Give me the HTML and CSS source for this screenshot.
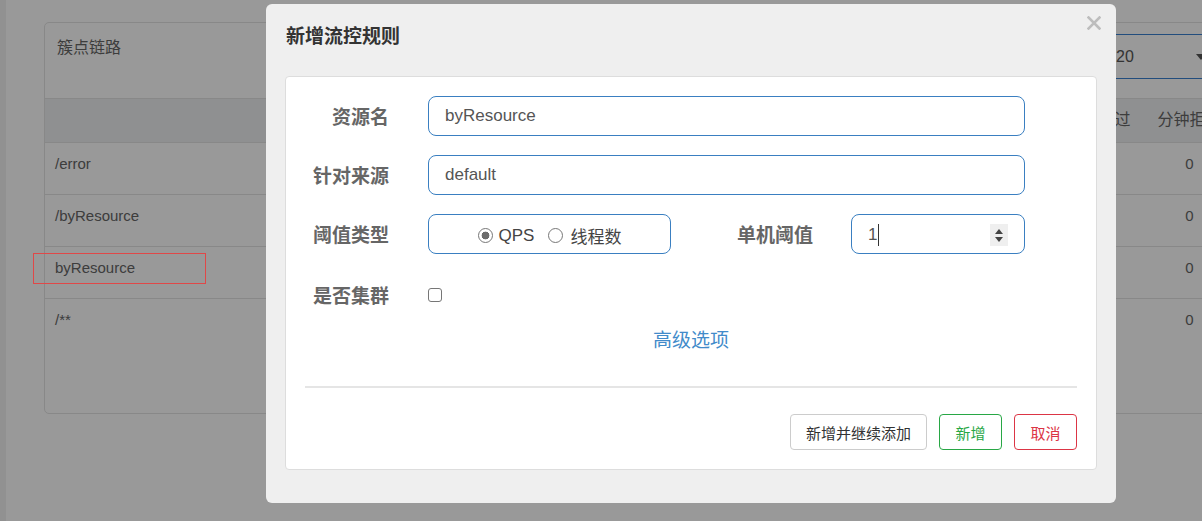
FILE: index.html
```html
<!DOCTYPE html>
<html lang="zh-CN">
<head>
<meta charset="utf-8">
<title>新增流控规则</title>
<link rel="stylesheet" href="styles.css">
</head>
<body>
<div class="page">
  <aside class="sidebar"></aside>
  <main class="main">
    <section class="card">
      <header class="card-head">
        <h2 class="card-title">簇点链路</h2>
        <div class="select"><span>20</span><span class="caret"></span></div>
      </header>
      <div class="table">
        <div class="tr th">
          <div class="td"></div>
          <div class="td">通过QPS</div>
          <div class="td">拒绝QPS</div>
          <div class="td">并发数</div>
          <div class="td">平均RT</div>
          <div class="td">分钟通过</div>
          <div class="td">分钟拒绝</div>
          <div class="td">操作</div>
        </div>
        <div class="tr">
          <div class="td name">/error</div>
          <div class="td num">0</div><div class="td num">0</div><div class="td num">0</div><div class="td num">0</div>
          <div class="td num">0</div><div class="td num">0</div><div class="td"></div>
        </div>
        <div class="tr">
          <div class="td name">/byResource</div>
          <div class="td num">0</div><div class="td num">0</div><div class="td num">0</div><div class="td num">0</div>
          <div class="td num">0</div><div class="td num">0</div><div class="td"></div>
        </div>
        <div class="tr">
          <div class="td name">byResource</div>
          <div class="td num">0</div><div class="td num">0</div><div class="td num">0</div><div class="td num">0</div>
          <div class="td num">0</div><div class="td num">0</div><div class="td"></div>
        </div>
        <div class="tr">
          <div class="td name">/**</div>
          <div class="td num">0</div><div class="td num">0</div><div class="td num">0</div><div class="td num">0</div>
          <div class="td num">0</div><div class="td num">0</div><div class="td"></div>
        </div>
      </div>
      <div class="card-foot"></div>
    </section>
  </main>
</div>

<div class="backdrop"></div>
<div class="annot"></div>

<div class="modal">
  <h3 class="modal-title">新增流控规则</h3>
  <button class="close" type="button" aria-label="关闭">
    <svg width="14" height="14" viewBox="0 0 14 14"><path d="M1.5 1.5 L12.5 12.5 M12.5 1.5 L1.5 12.5" stroke="#bdbdbd" stroke-width="2.6" stroke-linecap="square" fill="none"/></svg>
  </button>
  <div class="panel">
    <div class="row">
      <label class="label">资源名</label>
      <input class="input" type="text" value="byResource">
    </div>
    <div class="row">
      <label class="label">针对来源</label>
      <input class="input" type="text" value="default">
    </div>
    <div class="row">
      <label class="label">阈值类型</label>
      <div class="radio-group">
        <label class="opt"><input type="radio" name="grade" checked><span>QPS</span></label>
        <label class="opt opt-2"><input type="radio" name="grade"><span>线程数</span></label>
      </div>
      <label class="label label-2">单机阈值</label>
      <div class="number">
        <span class="num-val">1</span><span class="cursor"></span>
        <span class="spin">
          <svg width="18" height="22" viewBox="0 0 18 22"><rect width="18" height="22" fill="#efefef"/><path d="M5 10 L13 10 L9 5 Z" fill="#444"/><path d="M5 13 L13 13 L9 18 Z" fill="#444"/></svg>
        </span>
      </div>
    </div>
    <div class="row row-cluster">
      <label class="label">是否集群</label>
      <input class="check" type="checkbox">
    </div>
    <div class="advanced"><a href="#">高级选项</a></div>
    <div class="divider"></div>
    <div class="actions">
      <button class="btn btn-default" type="button">新增并继续添加</button>
      <button class="btn btn-success" type="button">新增</button>
      <button class="btn btn-danger" type="button">取消</button>
    </div>
  </div>
</div>
</body>
</html>
```

FILE: styles.css
```css
* { box-sizing: border-box; }
html, body { margin: 0; height: 100%; overflow: hidden; }
body {
  font-family: "Liberation Sans", "Noto Sans CJK SC", sans-serif;
  background: #fff;
  color: #666;
}

/* background page */
.page { display: flex; min-height: 100%; }
.sidebar { width: 6px; flex: none; background: #f2f2f2; }
.main { flex: none; padding: 22px 0 0 38px; }
.card {
  width: 1342px;
  border: 1px solid #e3e3e3;
  border-radius: 5px;
  background: #fff;
}
.card-head {
  height: 75px;
  display: flex;
  align-items: flex-start;
  padding: 11px 154px 0 12px;
}
.card-title {
  flex: 1;
  margin: 3px 0 0;
  font-size: 16px;
  line-height: 22px;
  font-weight: normal;
  color: #666;
}
.select {
  width: 128px;
  height: 45px;
  border: 1px solid #3a80d0;
  border-radius: 4px;
  padding: 0 24px 0 12px;
  display: flex;
  align-items: center;
  justify-content: space-between;
  font-size: 16px;
  color: #555;
}
.caret {
  width: 0; height: 0;
  border-left: 5px solid transparent;
  border-right: 5px solid transparent;
  border-top: 6px solid #555;
}
.tr {
  display: grid;
  grid-template-columns: 400px repeat(4, 152px) 91px 91px 150px;
  height: 52px;
  border-top: 1px solid #e3e3e3;
}
.tr.th { height: 44px; background: #eff0f2; }
.td {
  padding: 10px 10px 0;
  font-size: 15px;
  line-height: 21px;
  color: #666;
  white-space: nowrap;
}
.th .td { font-size: 16px; line-height: 22px; text-align: center; }
.td.num { text-align: center; }
.card-foot { height: 63px; }

/* overlay */
.backdrop { position: fixed; inset: 0; background: rgba(0, 0, 0, 0.4); }
.annot {
  position: fixed;
  left: 33px; top: 253px;
  width: 173px; height: 31px;
  border: 1px solid #e04848;
}

/* modal */
.modal {
  position: fixed;
  left: 266px; top: 4px;
  width: 850px;
  background: #efefef;
  border-radius: 6px;
  padding: 20px 19px 33px;
}
.modal-title {
  margin: 0 0 26px 1px;
  font-size: 19px;
  line-height: 26px;
  font-weight: bold;
  color: #333;
}
.close {
  position: absolute;
  left: 821px; top: 12px;
  width: 14px; height: 14px;
  padding: 0; border: 0; background: none;
  display: block;
}
.close svg { display: block; }
.panel {
  display: flex;
  flex-direction: column;
  background: #fff;
  border: 1px solid #ddd;
  border-radius: 4px;
  padding: 19px 0;
}
.row {
  display: flex;
  align-items: center;
  height: 40px;
  margin-bottom: 19px;
}
.label {
  flex: none;
  width: 103px;
  margin-right: 39px;
  padding-top: 4px;
  text-align: right;
  font-size: 19px;
  font-weight: bold;
  color: #666;
  line-height: 26px;
}
.label-2 { width: 142px; margin-right: 38px; }
.input {
  width: 597px;
  height: 40px;
  border: 1px solid #3a7fc1;
  border-radius: 8px;
  padding: 0 16px;
  font: 17px "Liberation Sans", sans-serif;
  color: #555;
  outline: none;
}
.radio-group {
  flex: none;
  width: 243px;
  height: 40px;
  border: 1px solid #3a7fc1;
  border-radius: 8px;
  padding-top: 3px;
  display: flex;
  align-items: center;
  justify-content: center;
  font-size: 17px;
  color: #444;
}
.opt { display: flex; align-items: center; gap: 6px; }
.opt-2 { margin-left: 14px; gap: 7px; }
.opt input {
  appearance: none;
  margin: 0;
  width: 15px; height: 15px;
  border: 1px solid #777;
  border-radius: 50%;
  background: #fff;
}
.opt input:checked {
  background: radial-gradient(circle, #6b6b6b 0 3.6px, #fff 4.2px);
}
.number {
  flex: none;
  width: 174px;
  height: 40px;
  border: 1px solid #3a7fc1;
  border-radius: 8px;
  padding: 1px 16px 0;
  display: flex;
  align-items: center;
  font-size: 17px;
  color: #555;
}
.cursor { width: 1px; height: 22px; background: #333; margin-left: 1px; }
.spin { margin-left: auto; display: block; }
.spin svg { display: block; }
.row-cluster { margin-top: 2px; margin-bottom: 13px; }
.check {
  appearance: none;
  margin: 0;
  width: 14px; height: 14px;
  border: 1.5px solid #767676;
  border-radius: 3px;
  background: #fff;
}
.advanced {
  text-align: center;
  font-size: 19px;
  line-height: 26px;
  margin-bottom: 32px;
}
.advanced a { color: #428bca; text-decoration: none; }
.divider { height: 2px; background: #e5e5e5; margin: 0 19px 26px; }
.actions {
  display: flex;
  justify-content: flex-end;
  gap: 12px;
  padding: 0 19px;
}
.btn {
  height: 36px;
  min-width: 63px;
  padding: 0 15px;
  border-radius: 4px;
  background: #fff;
  border: 1px solid #ccc;
  font-family: "Liberation Sans", "Noto Sans CJK SC", sans-serif;
  font-size: 15px;
  color: #333;
}
.btn-success { border-color: #28a745; color: #28a745; }
.btn-danger { border-color: #dc3545; color: #dc3545; }
```
